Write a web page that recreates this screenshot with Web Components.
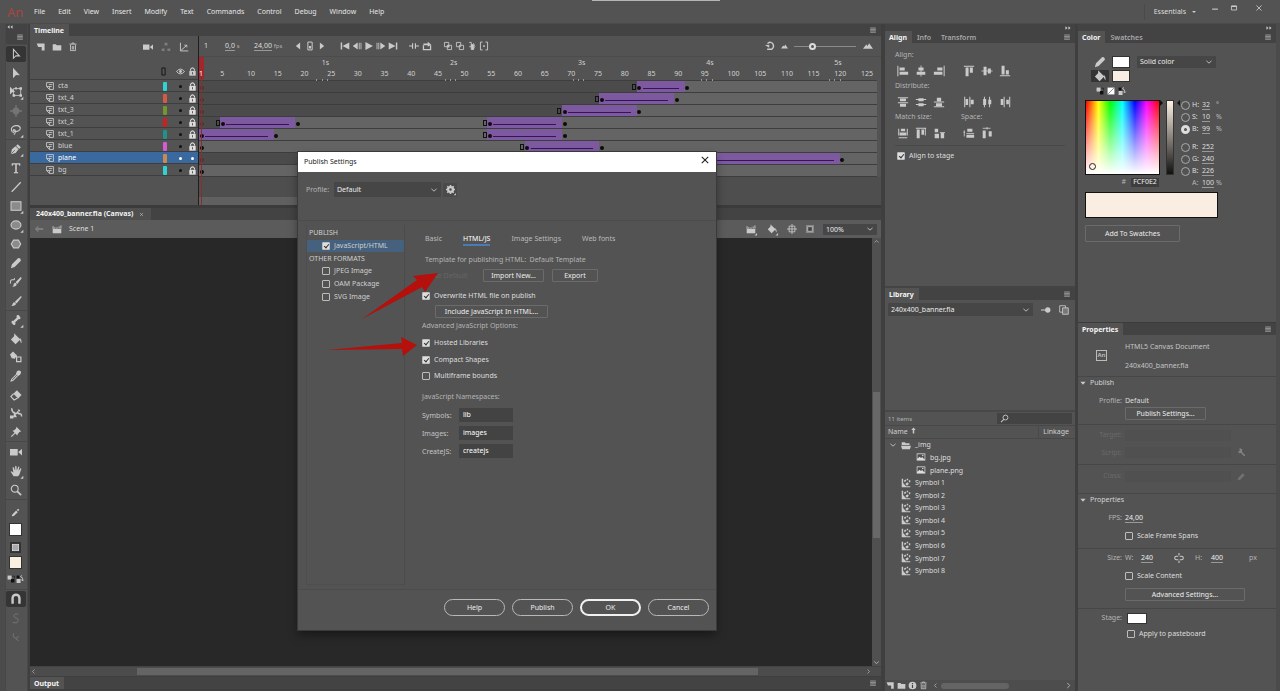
<!DOCTYPE html>
<html lang="en">
<head>
<meta charset="utf-8">
<title>Animate - Publish Settings</title>
<style>
:root{--ui:"Noto Sans","Open Sans",sans-serif;--panel:#535353;--strip:#434343;--edge:#3b3b3b;--line:#484848;--field:#464646;--text:#dedede;--dim:#b4b4b4;--icon:#cacaca}
html,body{margin:0;height:100%}
body{background:var(--strip);color:var(--text);font:7px/12px var(--ui);overflow:hidden}
</style>
</head>
<body>
<an-app></an-app>
<script>
const BASE = `*{box-sizing:border-box}:host{display:block;color:var(--text)}
button,input,select{font:inherit;color:inherit;margin:0;padding:0;border:0;background:none;outline:0}
b{font-weight:600}.row{display:flex;align-items:center}.dim{color:var(--dim)}.grow{flex:1}
a{color:inherit;text-decoration:none}`;
const define = (name, css, html, init) => customElements.define(name, class extends HTMLElement {
  connectedCallback(){
    if (this.shadowRoot) return;
    const t = document.createElement('template');
    t.innerHTML = `<style>${BASE}${css}</style>` + (typeof html === 'function' ? html(this) : html);
    this.attachShadow({mode:'open'}).append(t.content.cloneNode(true));
    if (init) init(this, this.shadowRoot);
  }
});

/* ---- icons, 14 x 14 grid ---- */
const S = (d, w=1.2) => `<path d="${d}" fill="none" stroke="currentColor" stroke-width="${w}"/>`;
const F = d => `<path d="${d}"/>`;
const ICONS = {
 arrow:S('M4 1.5v10.5l2.9-3 4.1.2z',1.2),
 sub:F('M3.5 1v12l3.5-3.6 4.5.1z'),
 transform:F('M0 1v9l2.5-2.6L6 7z')+S('M4 3h8.5v8H4z',1)+F('M3 9.5h3v3H3zM11 9.5h3v3h-3zM11 1.5h3v3h-3zM6 1.5h2v2.5H6z'),
 rot3d:`<g opacity=".28"><circle cx="7" cy="7" r="4"/>${S('M7 0v14M0 7h14',1.6)}</g>`,
 lasso:S('M4.5 10.2C1 9 .8 5.200 3 3.400c3-2.400 8.500-2 9 1.400.4 3-4.800 5-7.500 3.500C3 7.500 4.200 5.700 5.700 7c1.300 1.300.300 4-1.200 5.500',1.3),
 pen:F('M1 13l1.200-5.700 4.200-3.600L10 7.200 6.600 11.800z')+S('M8 2.500L11.700 6',2.600)+`<path d="M1.500 12.500L5.600 8.400" stroke="#535353" stroke-width=".9"/>`,
 text:F('M2 1.500h10v3h-1.200l-.4-1.500H7.900v8.700l1.600.4v1H4.500v-1l1.600-.4V3H3.600l-.4 1.500H2z'),
 lineTool:S('M2 12.500L12.500 1.500',1.400),
 rect:`<rect x="1.200" y="2" width="11.600" height="10" fill="#8b8b8b" stroke="currentColor" stroke-width="1.200"/>`,
 oval:`<ellipse cx="7" cy="7" rx="5.800" ry="4.800" fill="#8b8b8b" stroke="currentColor" stroke-width="1.300"/>`,
 poly:`<path d="M4.200 2.500h5.600L12.500 7 9.800 11.500H4.200L1.500 7z" fill="#8b8b8b" stroke="currentColor" stroke-width="1.300"/>`,
 pencil:F('M1 13l1.300-4.500 7-7q1.400-1 2.700.4t.4 2.700l-7 7z'),
 brushLine:F('M12.800 1L6.500 7.300l2 2L13.500 3zM5.800 8q2 .300 2 2.500-1.800 2.500-5 2 1.500-1 1.300-2.300.4-1.800 1.700-2.200z')+S('M.8 9Q-.3 3.500 3.500 4.500 6 4.500 5 2.500',1.200),
 brush:F('M13 1L5.700 8l2 2L13.500 2.500zM5 8.500q2 .300 2 2.300-1.800 2.500-5.500 2 1.500-1 1.500-2.300.5-1.600 2-2z'),
 bone:S('M4.500 9.500L9.500 4.500',2.600)+F('M3.500 7.500l3 3-.5 2q-2.800 1-3-1-2-.700-1-3zM10.500 6.500l-3-3 .5-2q2.800-1 3 1 2 .700 1 3z'),
 bucket:F('M1 7.500L6.500 2 12 7.500 6.500 13zM11.500 5.500q2.500 2 2 6.500-1.500-.5-2-4.500z')+S('M5.500 5.500V1',1.300),
 ink:F('M0 4l3.500-3.500L7 4l-1 5-4-.5zM4.500 6.500L8 4v4z')+S('M7.700 7h5v5.500h-5z',1.400),
 dropper:F('M7 4.300L9.700 7 12 5q2-3-.4-4.100T7.800 2z')+S('M8 4.800L2 10.800l-.7 2 2-.6 6-6',1.200),
 eraser:F('M8 1.500L13.500 7 9.500 11 4 5.500z')+S('M4.300 5.500L1 8.800 4.800 12.800 9 10.500',1.300),
 warp:S('M2 1.500q0 4 3 5.500t4-1l1.500 2q3-1 3 3',1.700)+F('M0 10h4v3.500H0zM9 2.500l3 1-1.500 3zM5 5l3 7H4z'),
 pin:F('M7.500 1L13 6.500l-2 .5-2 2.200L8.500 11 3 5.500l1.900-.5 2.200-2z')+S('M6 8L1.500 12.500',1.300),
 camera:F('M0 3.500h9v7.500H0zM9.500 7L14 3.500V11z'),
 hand:F('M4.200 13L.8 7.800q.600-1.300 2 0L4 9 3 3q.900-1.200 1.600.3L6 6.800 6 1.500q1-1.200 1.500 0L8 6.500 9.600 2q1.200-.8 1.300.4L10 7l2-3q1.300-.4 1.200.8L11 11 9.500 13z'),
 zoom:`<circle cx="5.500" cy="5.500" r="4" fill="none" stroke="currentColor" stroke-width="1.300"/>`+S('M8.500 8.500L13 13',2),
 magnet:S('M3 12.500V6a4 4 0 0 1 8 0v6.500',2.800),
 s1:`<g opacity=".22">${S('M10 2.500H6q-3 2.500 0 4 6 1.500 2 6H3',1.400)}</g>`,
 s2:`<g opacity=".22">${S('M4 2.500v4l6 5M7 9l3-3',1.400)}</g>`,
 newLayer:F('M1 2h11v10H8V7H3z'), folder:F('M1 3h4.500l1 1.500H13V12H1z'),
 trash:S('M3.500 4v8h7V4M2 3h10M5.500 3V1.500h3V3M6 5.500v5M8 5.500v5',1.200),
 tree:`<g opacity=".35">${F('M5 1h4v4H5zM1 9h4v3.500H1zM9 9h4v3.500H9z')}</g>`,
 graph:S('M2 1v11.500h11M3 11.500L10.500 5M7.500 4.500h3.500v3',1.300),
 prev:F('M10 2v10L4 7z'), next:F('M4 2v10l6-5z'),
 first:F('M1 2h2v10H1zM13 2v10L3.500 7z'), last:F('M11 2h2v10h-2zM1 2v10l9.500-5z'),
 back:F('M8 2v10L1 7zM9.500 2.500h1.200v9H9.500zM12 2.500h1.200v9H12z'), fwd:F('M6 2v10l7-5zM.8 2.500H2v9H.8zM3.300 2.500h1.200v9H3.300z'),
 play:F('M2 1.500v11L12.500 7z'),
 key:S('M4 1.500h6v11H4z',1.400)+F('M5.500 7h3v3.500h-3z'),
 center:S('M0 7h5M9 7h5M5 3v8M9 3v8',1.600),
 loop:S('M2 6v6h10V6',1.800)+F('M2 3.500h6V1l5 4.200L8 8V6H2z'),
 onion1:S('M2 2h6v6H2zM6 6h6v6H6z',1.200)+F('M6 6h3v3H6z'),
 onion2:S('M2 2h6v6H2zM6 6h6v6H6z',1.200),
 onion3:S('M3 2h3v6H3M6 5h3v7H6z',1.200)+F('M6 5h3v7H6z')+S('M9 3q4 4 0 9',1),
 marks:S('M5 1.500H2v11h3M9 1.500h3v11H9',1.300)+F('M6 6h2v2.500H6z'),
 undo:S('M3.500 3.500q5-3.500 7.500.5t-1.500 7.500H3',2)+F('M0 5.500l6-.2-.2 4.200z'),
 mtn:F('M0 11l4.500-6 2 2L8.500 3 14 11z'),
 eye:S('M.8 7Q7-.5 13.200 7 7 14.500.8 7z',1.500)+`<circle cx="7" cy="7" r="2.200"/>`,
 lock:F('M2 6h10v7.500H2z')+S('M4 6V3.500Q7-.800 10 3.500V6',1.700)+`<path d="M7 8v3.500" stroke="#444" stroke-width="1.300"/>`,
 layer:S('M1 1h12v12H6L1 8z',1.500)+S('M5 4.500h6M5 8h5M6 8v5M1 8h5',1.500),
 outline:`<path d="M4.500 1.500h5v11h-5z" fill="none" stroke="#161616" stroke-width="1.500"/>`,
 chev:S('M2.500 5L7 9l4.500-4',1.500), left:S('M9 3L5 7l4 4'), right:S('M5 3l4 4-4 4'), up:S('M3 9l4-4 4 4'),
 ham:`<g opacity=".75">${S('M2 3.500h10M2 6h10M2 8.500h10M2 11h10',1.400)}</g>`,
 dbl:F('M1 3l5 4-5 4zM8 3l5 4-5 4z'), dbll:F('M6 3L1 7l5 4zM13 3L8 7l5 4z'),
 clap:F('M1 7h12v6H1z')+S('M1.500 7V3M4 7V4.500M7 7V4.500M10 6.500V3.500M12.500 6.500V2',1.300),
 stagec:S('M7 0v14M0 7h14M3 3h8v8H3z',1.200),
 clip:`<path d="M0 0h14v14H0z" fill="#8a8a8a"/><path d="M3 3h8v8H3z" fill="#444" stroke="#ddd"/>`,
 gear:`<circle cx="7" cy="7" r="3.800" fill="none" stroke="currentColor" stroke-width="3.600"/>`+S('M7 0v3M7 11v3M0 7h3M11 7h3M2 2l2 2M10 10l2 2M12 2l-2 2M2 12l2-2',2.400),
 close:S('M2.500 2.500l9 9M11.500 2.500l-9 9',1.500), min:S('M2 9h10',2), max:S('M2.500 3.500h9v7h-9z',1.500)+F('M2.500 3h9v2.300h-9z'),
 alL:S('M1 1v12',1.200)+F('M3 3h6v3.500H3zM3 8h10v3.500H3z'), alC:S('M7 .5v13',1)+F('M4 3h6v3.500H4zM2 8h10v3.500H2z'), alR:S('M13 1v12',1.200)+F('M5 3h6v3.500H5zM1 8h10v3.500H1z'),
 alT:S('M1 1.500h12',1.200)+F('M3 3h3.500v10H3zM8 3h3.500v6H8z'), alM:S('M.5 7h13',1)+F('M3 2h3.500v10H3zM8 4h3.500v6H8z'), alB:S('M1 12.500h12',1.200)+F('M3 1h3.500v10H3zM8 6h3.500v5H8z'),
 diT:S('M1 2h12M1 8h12',1.200)+F('M3.500 3h7v3h-7zM3.500 9h7v3.500h-7z'), diM:S('M1 4h12M1 10h12',1.200)+F('M4 2.500h6v3.500H4zM4 8.500h6V12H4z'), diB:S('M1 7h12M1 12.500h12',1.200)+F('M4.500 2h5v4.500h-5zM3.500 8.500h7V12h-7z'),
 diL:S('M2 1v12M8 1v12',1.200)+F('M3 3.500h3v7H3zM9 4.500h3.500v5H9z'), diC:S('M4 1v12M10 1v12',1.200)+F('M2.500 3.500h3.500v7H2.500zM8.500 4.500H12v5H8.500z'), diR:S('M6 1v12M12.500 1v12',1.200)+F('M2 3.500h3v7H2zM8.500 4.500h3v5h-3z'),
 msW:S('M2 2v8M12 2v8M2 12.500h10',1.200)+F('M4.500 2h5v3h-5zM3 6.500h8V10H3z'), msH:S('M1 1.500h12M12 1v9',1.200)+F('M2 3h3.500v10H2zM7.500 3h3v6h-3z'), msB:F('M2 2h4v4H2zM2 8h5v5H2zM9 7h4v6H9z')+S('M8 6.500h6',1),
 spV:S('M1.500 4v7M.5 6h2',1)+F('M5 2h6v3.500H5zM4 9h9v3.500H4z')+S('M4 7.500h9',1), spH:S('M2 1.500h9M7 0v3',1)+F('M2 4h3.500v9H2zM9 5h3.500v6H9z'),
 swap1:F('M1 1h7v7H1z')+`<path d="M7 7h6v6H7z" fill="#111"/><path d="M9 2h4v4" fill="none" stroke="#111"/>`,
 none:`<path d="M1 1h12v12H1z" fill="#fff"/><path d="M2 12L12 2" stroke="#777" stroke-width="1.500"/>`,
 swap2:`<path d="M1 1h5v5H1z" fill="#111"/>`+F('M1 7h7v7H1z')+S('M8 2.500q4.500 1 3.500 7M9.500 8l2 2.500 2-2.500M10 .5L8 2.500l2 2.500',1.400),
 pinH:S('M0 7h7',1.500)+`<circle cx="9.500" cy="7" r="3.700"/>`,
 newLib:S('M1 1h8v9H1z',1.200)+`<path d="M5 4h8v9H5z" fill="#777" stroke="currentColor" stroke-width="1.200"/>`,
 search:`<circle cx="8.500" cy="5.500" r="3.800" fill="none" stroke="currentColor" stroke-width="1.400"/>`+S('M6 8.500L1.500 12.500',1.600),
 sort:F('M7 1l4.500 5h-3v7h-3V6h-3z'),
 openFolder:F('M1 3h4.500l1 1.500H12V7H1zM0 8h14l-1.500 5H1.500z'),
 image:`<path d="M1 2h12v10H1z" fill="#ddd"/><path d="M2 3h10v7.500L8.500 7 7 8.500 5 6.500 2 9.500z" fill="#4c4c4c"/><circle cx="9.500" cy="5" r="1" fill="#ddd"/>`,
 symbol:F('M1 1h2v6l4 4.500h6V13H1zM4 4l2-2 1.500 1.500L5.500 6zM8 1h2v2H8zM11 3h2v3h-2zM9 6l2 2-2.500 3L6 8.500z'),
 info:`<circle cx="7" cy="7" r="6"/><path d="M7 6v5M7 3v1.600" stroke="#444" stroke-width="1.800"/>`,
 wrench:`<g opacity=".4">${S('M5 5l7 7',2.500)}${F('M4 0l4 2v5l-4 1-3-2 3-1V3z')}</g>`, pencilDim:`<g opacity=".25">${F('M1 13l1-4 7-7 3 3-7 7z')}</g>`,
 link:S('M6 4.500H3.500a2.500 2.500 0 0 0 0 5H6M8 4.500h2.500a2.500 2.500 0 0 1 0 5H8M7 0v3M7 11v3',1.500),
 tri:F('M1 4h12L7 11z'),
 backArrow:`<g opacity=".3">${F('M6 2v3.500h7v3H6V12L1 7z')}</g>`,
 kPen:F('M1 13l1-3 6-6 2.500 2.500-6 6zM9 3l2-2 2 2-2 2z'),
 magGrid:`<rect x="0" y="0" width="14" height="14" fill="#333"/><rect x="3" y="3" width="8" height="8" fill="#aaa" stroke="#ddd"/>`
};
define('an-icon', `:host{display:inline-flex;flex:none;width:12px;height:12px;color:var(--icon)}svg{display:block;width:100%;height:100%;overflow:visible}`,
 el => `<svg viewBox="0 0 14 14" fill="currentColor" aria-hidden="true">${ICONS[el.getAttribute('name')]}${el.hasAttribute('more') ? `<path d="M15.500 16v-3.500L12 16z"/>` : ''}</svg>`);
const I = (n, s='', a='') => `<an-icon name="${n}" ${a} ${s ? `style="${s}"` : ''}></an-icon>`;

/* ---- small controls ---- */
define('check-box', `:host{display:inline-block}label{display:flex;align-items:center;gap:4px;white-space:nowrap}
input{appearance:none;width:8px;height:8px;border:1px solid #bdbdbd;border-radius:1px;flex:none}
input:checked{background:#dedede;position:relative}
input:checked::after{content:"";position:absolute;left:2px;top:0;width:2px;height:4px;border:solid #333;border-width:0 1px 1px 0;transform:rotate(40deg)}`,
 el => `<label><input type="checkbox" ${el.hasAttribute('checked') ? 'checked' : ''}><span><slot></slot></span></label>`);
define('push-button', `:host{display:inline-block}button{display:block;width:100%;height:100%;border:1px solid #6b6b6b;border-radius:1px;text-align:center;white-space:nowrap;color:#ececec;line-height:10px}
:host([round]) button{border:1px solid #b8b8b8;border-radius:9px}:host([primary]) button{border:2px solid #f0f0f0}
:host([ghost]) button{border-color:transparent;color:#666}`,
 el => `<button type="button" ${el.hasAttribute('ghost') ? 'disabled' : ''}><slot></slot></button>`);
define('drop-down', `:host{display:block;position:relative;background:var(--field)}select{appearance:none;display:block;width:100%;height:100%;padding:0 14px 0 3px;color:#ececec;opacity:1}
an-icon{position:absolute;right:3px;top:50%;margin-top:-4px;width:8px;height:8px;pointer-events:none}`,
 el => `<select aria-label="${el.getAttribute('label')}"><option>${el.getAttribute('value')}</option></select>${I('chev')}`);
define('panel-tabs', `:host{display:flex;height:12px;background:var(--strip);align-items:stretch}
button{padding:0 5px;color:#a8a8a8;font-weight:600;line-height:11px}button:first-of-type{background:var(--panel);color:#f4f4f4;font-weight:700;padding:0 5px 0 4px}
an-icon{width:8px;height:8px;margin:2px 4px 0 auto}`,
 el => el.getAttribute('tabs').split(',').map(t => `<button type="button">${t}</button>`).join('') + I('ham'));

/* ---- title bar ---- */
define('title-bar', `:host{display:flex;height:24px;align-items:center;background:var(--panel);position:relative;border-bottom:1px solid #4b4b4b}
.logo{color:#a8463f;font-size:13px;line-height:20px;width:27px;padding-left:7px}
nav{display:flex;gap:13px;color:#e6e6e6;padding-left:7px}.strip{position:absolute;left:592px;width:128px;top:0;height:1px;background:#b5b5b5}
.ws{margin-left:auto;display:flex;align-items:center;border-left:1px solid #4a4a4a;height:16px;padding-left:9px}
.ws i{width:0;border:2px solid transparent;border-top:2px solid #ccc;border-bottom:0;margin-left:6px}
.win{display:flex;margin:0 16px 8px 14px;gap:9px}.win button{width:10px;height:8px;display:grid;place-items:center}.win button:last-child{margin-left:6px}.win an-icon{width:8px;height:8px}`,
`<div class="logo">An</div><nav>${'File,Edit,View,Insert,Modify,Text,Commands,Control,Debug,Window,Help'.split(',').map(m => `<a href="#">${m}</a>`).join('')}</nav><div class="strip"></div>
<div class="ws">Essentials<i></i></div><div class="win"><button aria-label="Minimize">${I('min')}</button><button aria-label="Maximize">${I('max')}</button><button aria-label="Close">${I('close')}</button></div>`);

/* ---- tools ---- */
const G = (names, h) => `<div class="g" style="height:${h}px">${names.split(' ').map(n => { const [a, m] = n.split('+'); return `<button aria-label="${a}" class="${a === 'arrow' || a === 'magnet' ? 'on' : ''}">${I(a, '', m !== undefined ? 'more' : '')}</button>`; }).join('')}</div>`;
define('tool-panel', `:host{display:flex;flex-direction:column;background:var(--panel);border-left:1px solid #484848;border-right:1px solid #484848}
.top{height:20px;background:var(--strip);display:flex;flex-direction:column;justify-content:space-between;padding:0 3px 3px 1px}.top an-icon{width:6px;height:6px}.top an-icon:last-child{align-self:flex-end;width:8px;height:8px}
.g{display:grid;grid-auto-rows:1fr;border-top:1px solid var(--line);flex:none;padding-right:1px}button{display:grid;place-items:center;width:20px;justify-self:center}.on{background:#353535;border-radius:2px;align-self:center;height:16px}
.c{border-top:1px solid var(--line);display:flex;flex-direction:column;align-items:center;height:90px;padding:8px 2px 0 0}.sw{width:13px;height:13px;background:#fff;border:1px solid #333;margin-top:6px}.c2{background:#faf0e0;margin-top:3px}
.c .s{display:flex;gap:1px;margin-top:6px}.s an-icon{width:8px;height:8px}`,
`<div class="top">${I('dbll')}${I('ham')}</div>
${G('arrow sub transform+ rot3d lasso+', 95)}${G('pen+ text lineTool rect+ oval+ poly pencil brushLine brush', 171)}${G('bone+ bucket ink dropper eraser warp pin', 131)}${G('camera hand+ zoom', 58)}
<div class="c">${I('kPen','width:9px;height:9px')}<div class="sw"></div>${I('magGrid','margin-top:6px;width:11px;height:11px')}<div class="sw c2"></div><div class="s">${I('swap1')}${I('swap2')}</div></div>
${G('magnet s1 s2', 57)}`);

/* ---- timeline ---- */
const LAYERS = [
 ['cta','#2fd3d3',[['e',82],['t',83,92]],83],['txt_4','#d35a45',[['e',75],['t',76,90]],76],['txt_3','#76952a',[['e',68],['t',69,83]],69],
 ['txt_2','#c92020',[['e',4],['t',5,19],['e',54],['t',55,69]],5],['txt_1','#1f9486',[['t',1,15],['e',54],['t',55,69]],1],
 ['blue','#d35bd3',[['k',1],['e',61],['t',62,76]],1],['plane','#c98a4f',[['t',70,121]],70],['bg','#2fd3d3',[['k',1]],1]];
define('layer-row', `:host{display:grid;grid-template-columns:118px 1fr 12px 12px;align-items:center;height:12px;border-bottom:1px solid #3e3e3e;padding-left:16px;color:#cfcfcf}
:host([sel]){background:#3a699f;color:#fff}.n{display:flex;gap:4px;align-items:center}.n an-icon{width:8px;height:8px}.col{width:4px;height:9px;justify-self:start;margin-left:-1px;border-radius:1px}
i{width:3px;height:3px;border-radius:50%;background:#111;justify-self:center}:host([sel]) i{background:#fff}.l{width:9px;height:9px;justify-self:center;color:#ddd}`,
 el => `<div class="n">${I('layer')}${el.getAttribute('name')}</div><div class="col" style="background:${el.getAttribute('color')}"></div><i></i>${el.hasAttribute('sel') ? '<i></i>' : `<an-icon class="l" name="lock"></an-icon>`}`);
const track = ([n, c, parts, lit]) => `<div class="tr"><div class="lit" style="grid-column:${lit}/128"></div>${lit > 1 ? '<i class="o" style="grid-column:1"></i>' : ''}${parts.map(([k, a, b]) =>
  k === 'e' ? `<i class="e" style="grid-column:${a}"></i>` : k === 'k' ? `<i class="k" style="grid-column:${a}"></i>` :
  `<div class="tw" style="grid-column:${a}/${b}"><s></s></div><i class="k" style="grid-column:${a}"></i><i class="k" style="grid-column:${b}"></i>`).join('')}</div>`;
define('timeline-panel', `:host{display:flex;flex-direction:column;background:var(--panel);height:181px}
.body{display:grid;grid-template-columns:169px 1fr;flex:1}.lay{border-right:1px solid #1f1f1f;display:flex;flex-direction:column}
.bar{height:21px;display:flex;align-items:center;border-bottom:1px solid #4c4c4c}.bar an-icon{width:10px;height:10px}
.a{padding:0 9px 0 6px;gap:6px;border:0}.hd{height:23px;display:grid;grid-template-columns:138px 1fr 12px 12px;align-items:end;padding-bottom:3px;border-bottom:1px solid #3e3e3e}.hd an-icon{width:9px;height:9px;justify-self:center}.hd an-icon:first-of-type{justify-self:end}
.b{padding:0 7px 0 5px}.grp{display:flex;gap:2px;align-items:center;height:100%}.grp+.grp{margin-left:11px}u{text-underline-offset:2px;text-decoration-color:#999}small{font-size:6px;color:#b0b0b0}
.tl{position:relative;display:flex;flex-direction:column}.ruler,.tr{display:grid;grid-template-columns:repeat(127,minmax(0,1fr))}
.area{width:100%;padding-right:4px}.ruler{height:24px;grid-template-rows:11px 13px;color:#d2d2d2;border-bottom:1px solid #3e3e3e}.ruler span{white-space:nowrap;width:0}
.tick{grid-row:2;align-self:end;height:2px;width:1px;background:#999}
.tr{height:12px;border-bottom:1px solid #3d3d3d;background:#4b4b4b;grid-template-rows:11px}.tr>*{grid-row:1}.lit{background:#646464}.tw{background:#7d5a9f;display:flex;align-items:flex-end;padding:0 6px 3px}
s{flex:1;height:1px;background:#35145c}i{align-self:end;margin-bottom:2px;justify-self:center}.k{width:4px;height:4px;border-radius:50%;background:#0c0c0c}.e{width:4px;height:6px;border:1px solid #111}.o{width:4px;height:4px;border:1px solid #6b2222;border-radius:50%}
.ph{position:absolute;left:0;top:0;width:5px;height:22px;background:#a3272a}.pl{position:absolute;left:2px;top:22px;bottom:-28px;width:1px;background:#8d2c2e}
.one{position:relative;color:#fff}.foot{height:28px;background:#4e4e4e;display:flex}.sb{margin-top:auto;height:8px;background:#606060;width:70%}
input[type=range]{appearance:none;width:62px;height:8px}input::-webkit-slider-runnable-track{height:1px;background:#8a8a8a}input::-webkit-slider-thumb{appearance:none;width:7px;height:7px;margin-top:-3px;border:2px solid #ddd;border-radius:50%;background:#555}
.z{margin-left:auto;display:flex;align-items:center;gap:6px}`,
`<panel-tabs tabs="Timeline"></panel-tabs>
<div class="body"><div class="lay"><div class="bar a">${I('newLayer')}${I('folder')}${I('trash')}<span class="grow"></span><span class="row" style="gap:8px">${I('camera')}${I('tree')}${I('graph')}</span></div>
<div class="hd">${I('outline')}<span></span>${I('eye')}${I('lock')}</div>
${LAYERS.map(([n, c]) => `<layer-row name="${n}" color="${c}" ${n === 'plane' ? 'sel' : ''}></layer-row>`).join('')}</div>
<div><div class="bar b"><div style="width:21px">1</div><div style="width:29px"><u>0,0</u> <small>s</small></div><div style="width:39px"><u>24,00</u> <small>fps</small></div>
<div class="grp">${I('prev')}${I('key')}${I('next')}</div><div class="grp" style="margin-left:13px">${I('first')}${I('back')}${I('play')}${I('fwd')}${I('last')}</div>
<div class="grp" style="gap:3px">${I('center')}${I('loop')}</div><div class="grp">${I('onion1')}${I('onion2')}${I('onion3')}${I('marks')}</div>
<div class="z">${I('undo')}${I('mtn','width:7px;height:7px')}<input type="range" aria-label="Timeline zoom" min="0" max="100" value="27">${I('mtn','width:12px')}</div></div>
<div class="tl"><div class="area"><div class="ruler">${[1,2,3,4,5].map(s => `<span style="grid-area:1/${s*24}">${s}s</span>`).join('')}<div class="ph"></div><span class="one" style="grid-area:2/1">1</span>${Array.from({length:25}, (_, i) => `<span style="grid-area:2/${i*5+5}">${i*5+5}</span>`).join('')}${[23,24,25,47,48,49,71,72,73,95,96,97,119,120,121].map(n => `<div class="tick" style="grid-column:${n}"></div>`).join('')}</div>
${LAYERS.map(track).join('')}</div><div class="pl"></div></div><div class="foot"><div class="sb"></div></div></div></div>`);

/* ---- stage ---- */
define('stage-panel', `:host{display:flex;flex-direction:column;border-top:3px solid #3b3b3b;flex:1;min-height:0}
.tabs{display:flex;height:12px;background:var(--strip)}.tabs button{background:#4f4f4f;padding:0 7px 0 6px;font-weight:700;color:#f2f2f2;display:flex;align-items:center;gap:6px}.tabs an-icon{width:5px;height:5px}
.bar{height:18px;background:#5b5b5b;display:flex;align-items:center;padding:0 4px 0 4px}.bar>an-icon{width:10px;height:10px}.bar .r{margin-left:auto}
.r{gap:9px}.r an-icon{width:10px;height:10px}drop-down{width:54px;height:11px}
.view{flex:1;display:grid;grid-template-columns:1fr 9px;min-height:0}.cv{background:#282828}.vs{background:#505050;display:flex;flex-direction:column;justify-content:space-between;align-items:center}.vs an-icon{width:7px;height:7px}
.vs i{width:7px;height:146px;background:#686868;margin-top:26px}
.hs{height:10px;background:#4c4c4c;display:flex;align-items:center;border-top:1px solid #444}.hs an-icon{width:7px;height:7px}.hs i{height:7px;background:#646464;flex:0 0 73%;margin-left:100px}.hs an-icon:last-child{margin-left:auto;margin-right:9px}
panel-tabs{height:12px;margin:1px 0 2px}`,
`<div class="tabs"><button>240x400_banner.fla (Canvas) ${I('close')}</button></div>
<div class="bar">${I('backArrow')}<span style="width:8px"></span>${I('clap')}<span style="width:7px"></span><span>Scene 1</span><div class="r row">${I('clap','width:12px','more')}${I('bucket','width:12px','more')}${I('stagec')}${I('clip','width:8px;height:8px')}<drop-down label="Zoom" value="100%"></drop-down></div></div>
<div class="view"><div class="cv"></div><div class="vs">${I('up')}<i></i>${I('chev')}</div></div><div class="hs">${I('left')}<i></i>${I('right')}</div>
<panel-tabs tabs="Output"></panel-tabs>`);

/* ---- align ---- */
const icons = s => s.split(' ').map(n => I(n)).join('');
define('align-panel', `:host{background:var(--panel);height:255px}.b{padding:7px 10px 0 10px}.h{height:10px;line-height:10px;display:grid;grid-template-columns:66px 1fr;color:var(--dim)}
.g{height:21px;display:flex;align-items:center;gap:6px;padding-left:2px}.g an-icon:nth-child(4){margin-left:12px}hr{border:0;border-top:1px solid #484848;margin:2px 0 4px}.b>check-box{margin-left:2px}`,
`<panel-tabs tabs="Align,Info,Transform"></panel-tabs><div class="b"><div class="h">Align:</div><div class="g">${icons('alL alC alR alT alM alB')}</div><div class="h">Distribute:</div><div class="g">${icons('diT diM diB diL diC diR')}</div>
<div class="h"><span>Match size:</span><span>Space:</span></div><div class="g">${icons('msW msH msB spV spH')}</div><hr><check-box checked>Align to stage</check-box></div>`);

/* ---- library ---- */
define('library-panel', `:host{background:var(--panel);display:flex;flex-direction:column;flex:1;border-top:2px solid #444}
.sel{display:flex;align-items:center;gap:8px;padding:3px 6px 0 3px;height:16px}.sel drop-down{flex:1;height:13px}.sel an-icon{width:10px;height:10px}
.pre{height:96px;border-bottom:2px solid #484848}.s{display:flex;height:13px;align-items:center;padding:0 3px;font-size:6px;color:var(--dim)}.s label{margin-left:auto;background:#434343;width:75px;height:11px;display:flex;align-items:center;padding:0 3px;gap:3px}.s an-icon{width:9px;height:9px}.s input{width:50px}
.list{border-collapse:collapse;width:100%;height:152px}.list th{font-weight:400;text-align:left;color:#cfcfcf;border-bottom:1px solid #484848;border-top:1px solid #484848;padding:0 3px}.list th:last-child{text-align:right;border-left:1px solid #484848;width:37px;padding-right:6px}
td{padding:0}th,td{line-height:11px}.r{display:flex;align-items:center;gap:4px;height:12px}.r an-icon{width:10px;height:10px}.s0{padding-left:4px}.s1{padding-left:16px}.s2{padding-left:31px;}
.f{margin-top:auto;height:11px;display:flex;align-items:center;gap:2px;padding-left:1px;background:#4d4d4d}.f an-icon{width:9px;height:9px}.f i{height:6px;width:68px;background:#646464;border-radius:3px}.f an-icon:last-child{margin-left:auto;margin-right:2px}th an-icon{width:7px;height:7px}.s0 an-icon:first-child{width:8px;height:8px}`,
`<panel-tabs tabs="Library"></panel-tabs><div class="sel"><drop-down label="Document" value="240x400_banner.fla"></drop-down>${I('pinH')}${I('newLib')}</div><div class="pre"></div>
<div class="s">11 items<label>${I('search')}<input type="text" aria-label="Search"></label></div>
<table class="list"><tr><th>Name ${I('sort')}</th><th>Linkage</th></tr>
<tr><td colspan="2"><div class="r s0">${I('chev')}${I('openFolder')}_img</div></td></tr>${['bg.jpg','plane.png'].map(n => `<tr><td colspan="2"><div class="r s2">${I('image')}${n}</div></td></tr>`).join('')}${[1,2,3,4,5,6,7,8].map(n => `<tr><td colspan="2"><div class="r s1">${I('symbol')}Symbol ${n}</div></td></tr>`).join('')}</table>
<div class="f">${I('newLayer')}${I('folder')}${I('info')}${I('trash')}${I('left','width:7px;margin-left:2px')}<i></i>${I('right')}</div>`);

/* ---- color ---- */
const ch = (n, v, u, on, c='') => `<div class="ch ${c}"><label><input type="radio" name="ch" ${on ? 'checked' : ''}>${n}:</label><u>${v}</u><small>${u}</small></div>`;
define('color-panel', `:host{background:var(--panel);height:291px;}.b{padding:13px 0 0 7px}
.top{display:grid;grid-template-columns:18px 18px 1fr;column-gap:3px;grid-auto-rows:12px;row-gap:2px;padding-left:6px}.top .i{display:grid;place-items:center}.top .on{background:#353535}.top div.sw{border:1px solid #333;background:#fff}.top drop-down{width:79px;height:12px;margin-left:4px}
.m{display:flex;gap:3px;padding:5px 0 0 11px;height:18px}.m an-icon{width:8px;height:8px}.p{display:grid;grid-template-columns:75px 8px 1fr;column-gap:6px;height:87px}
.hue{height:75px;border:1px solid #111;background:linear-gradient(to top,#fff,rgba(255,255,255,0)),linear-gradient(90deg,#f00,#ff0 17%,#0f0 33%,#0ff 50%,#00f 67%,#f0f 83%,#f00);position:relative}.hue i{position:absolute;left:3px;bottom:4px;width:7px;height:7px;border:1px solid #222;border-radius:50%}
.br{height:75px;border:1px solid #333;background:linear-gradient(#fff2e4,#111);position:relative}.br::before,.br::after{content:"";position:absolute;top:-1px;border:3px solid transparent}.br::before{left:-7px;border-left-color:#111}.br::after{right:-7px;border-right-color:#111}
.ch{display:grid;grid-template-columns:20px 13px 1fr;height:12px;align-items:center;column-gap:1px}.ch label{display:flex;gap:2px;align-items:center}.v{padding-left:1px;margin-top:-1px}.v .gap{height:6px}
input[type=radio]{appearance:none;width:9px;height:9px;border:1px solid #aaa;border-radius:50%}input:checked{border:3px solid #ddd!important}.al input{visibility:hidden}u{text-decoration-color:#999;text-underline-offset:2px}small{font-size:7px;color:#bbb}.al label{color:var(--dim)}
.hex{display:flex;justify-content:flex-end;gap:5px;align-items:center;height:14px;width:74px;color:var(--dim)}.hex input{width:28px;background:#3d3d3d;text-align:center;height:9px;color:#f0f0f0}
.pv{width:133px;height:26px;border:1px solid #111;background:#faeee2;margin:5px 0 7px}push-button{width:95px;height:17px}`,
`<panel-tabs tabs="Color,Swatches"></panel-tabs><div class="b"><div class="top"><div class="i">${I('pencil')}</div><div class="sw"></div><drop-down label="Type" value="Solid color"></drop-down><div class="i on">${I('bucket')}</div><div class="sw" style="background:#faeee2"></div></div>
<div class="m">${I('swap1')}${I('none')}${I('swap2')}</div>
<div class="p"><div><div class="hue"><i></i></div><label class="hex"># <input value="FCF0E2" aria-label="Hex"></label></div><div class="br"></div><div class="v">${ch('H',32,'°')}${ch('S',10,'%')}${ch('B',99,'%',1)}<div class="gap"></div>${ch('R',252,'')}${ch('G',240,'')}${ch('B',226,'')}${ch('A',100,'%',0,'al')}</div></div>
<div class="pv"></div><push-button>Add To Swatches</push-button></div>`);

/* ---- properties ---- */
define('properties-panel', `:host{background:var(--panel);flex:1;border-top:1px solid #3c3c3c}
section{border-bottom:1px solid #474747}.r{display:grid;grid-template-columns:44px 1fr;column-gap:3px;align-items:center}.r>:first-child{text-align:right;color:var(--dim)}
.doc{display:grid;grid-template-columns:47px 1fr;color:#c4c4c4;height:42px;padding:3px 0 1px}.doc p{margin:0;height:19px;line-height:18px}.an{align-self:center;justify-self:center;margin-bottom:4px;width:11px;height:11px;border:1px solid #bbb;line-height:9px;text-align:center;font-weight:600;font-size:6px}
h3{margin:0;font:inherit;display:flex;gap:4px;align-items:center;height:12px;padding-left:2px;color:#d4d4d4}h3 an-icon{width:6px;height:6px}
.x{display:flex;align-items:center}u{text-underline-offset:2px;text-decoration-color:#999;color:#eee}.sw{width:20px;height:11px;background:#fff;border:1px solid #333;margin-left:2px}.d1>:first-child{color:#6a6a6a!important}.f{width:106px;height:11px;background:#505050}`,
`<panel-tabs tabs="Properties"></panel-tabs>
<section class="doc"><div class="an">An</div><div><p>HTML5 Canvas Document</p><p>240x400_banner.fla</p></div></section>
<section style="height:48px"><h3>${I('tri')}Publish</h3><div class="r" style="height:12px;margin-top:6px"><span>Profile:</span><span>Default</span></div><div class="r"><span></span><push-button style="width:81px;height:13px">Publish Settings...</push-button></div></section>
<section style="height:40px"><div class="r d1" style="height:20px"><span>Target:</span><div class="f"></div></div><div class="r d1" style="height:15px"><span>Script:</span><div class="x"><div class="f"></div>${I('wrench','width:9px;height:9px;margin-left:6px')}</div></div></section>
<section style="height:29px"><div class="r d1" style="height:22px"><span>Class:</span><div class="x"><div class="f"></div>${I('pencilDim','width:9px;height:9px;margin-left:6px')}</div></div></section>
<section style="height:55px"><h3>${I('tri')}Properties</h3><div class="r" style="height:24px"><span>FPS:</span><u style="justify-self:start">24,00</u></div><div class="r" style="height:12px"><span></span><check-box>Scale Frame Spans</check-box></div></section>
<section style="height:60px"><div class="r" style="height:17px"><span>Size:</span><div class="x"><span class="dim" style="width:16px">W:</span><u style="width:33px">240</u>${I('link','width:10px;height:10px;margin-right:11px')}<span class="dim" style="width:16px">H:</span><u style="width:38px">400</u><span class="dim">px</span></div></div>
<div class="r" style="height:20px"><span></span><check-box>Scale Content</check-box></div><div class="r" style="margin-top:2px"><span></span><push-button style="width:120px;height:13px">Advanced Settings...</push-button></div></section>
<div class="r" style="height:18px"><span>Stage:</span><div class="sw"></div></div><div class="r" style="height:14px"><span></span><check-box style="margin-left:2px">Apply to pasteboard</check-box></div>`);

/* ---- publish dialog ---- */
define('publish-dialog', `:host{background:var(--panel);width:418px;display:flex;flex-direction:column;box-shadow:0 0 0 1px #3a3a3a,0 5px 9px rgba(0,0,0,.4)}
header{height:20px;background:#fff;color:#222;display:flex;align-items:center;justify-content:space-between;padding:0 6px}header an-icon{width:10px;height:10px;color:#222}
.prof{display:flex;align-items:center;height:49px;padding:0 8px 13px;border-bottom:1px solid #4c4c4c}.prof drop-down{width:107px;height:15px;margin:0 2px 0 2px}.prof .g{width:14px;height:14px;background:#4a4a4a;display:grid;place-items:center}.g an-icon{width:9px;height:9px}
.mid{display:grid;grid-template-columns:99px 1fr;height:369px;padding:4px 8px;border-bottom:1px solid #4c4c4c;gap:17px}.nav{border-right:1px solid #4b4b4b;border-left:1px solid #4e4e4e;border-bottom:1px solid #4e4e4e}
.nav .l{display:grid;grid-auto-rows:1fr;height:76px;margin-top:2px}.nav .l>*{padding-left:2px;display:flex;align-items:center;color:#cfcfcf}.nav check-box{padding-left:15px!important}.nav .on{background:#45617e}
.tabs{display:flex;gap:21px;height:12px;margin:8px 0 9px 3px;align-items:flex-start}.tabs button{line-height:11px;color:#bbb}.tabs .on{color:#fff;border-bottom:2px solid #4a7bb5;height:13px}
.main{color:#ddd}.bt{display:flex;gap:8px;margin:3px 0 8px}.bt push-button{height:13px}.c{display:block;height:12px}.ns{display:grid;grid-template-columns:37px 54px;row-gap:4px;margin-top:5px;color:#c4c4c4}.ns input{background:#434343;height:14px;padding:0 4px 2px;color:#fff;width:54px;min-width:0}.ns label{line-height:16px;height:14px}
footer{display:flex;justify-content:flex-end;gap:7px;padding:9px 7px 14px}footer push-button{width:61px;height:17px}
.arrows{position:absolute;left:0;top:0;width:130px;height:220px;pointer-events:none;overflow:visible}`,
`<header>Publish Settings<button aria-label="Close">${I('close')}</button></header>
<div class="prof"><span class="dim" style="width:26px">Profile:</span><drop-down label="Profile" value="Default"></drop-down><button class="g" aria-label="Profile options">${I('gear','','more')}</button></div>
<div class="mid"><div class="nav"><div class="l"><span>PUBLISH</span><check-box class="on" checked>JavaScript/HTML</check-box><span>OTHER FORMATS</span><check-box>JPEG Image</check-box><check-box>OAM Package</check-box><check-box>SVG Image</check-box></div></div>
<div class="main"><div class="tabs"><button>Basic</button><button class="on">HTML/JS</button><button>Image Settings</button><button>Web fonts</button></div>
<div class="dim" style="padding-left:3px">Template for publishing HTML:&ensp;Default Template</div>
<div class="bt"><push-button ghost style="width:53px">Use Default</push-button><push-button style="width:61px">Import New...</push-button><push-button style="width:46px">Export</push-button></div>
<check-box class="c" checked>Overwrite HTML file on publish</check-box><push-button style="width:113px;height:13px;margin:3px 0 2px 13px">Include JavaScript In HTML...</push-button>
<div class="dim" style="height:12px">Advanced JavaScript Options:</div><div style="height:5px"></div><check-box class="c" checked>Hosted Libraries</check-box><div style="height:5px"></div><check-box class="c" checked>Compact Shapes</check-box><div style="height:4px"></div><check-box class="c">Multiframe bounds</check-box>
<div class="dim" style="margin-top:9px">JavaScript Namespaces:</div>
<div class="ns"><label for="a">Symbols:</label><input id="a" value="lib"><label for="b">Images:</label><input id="b" value="images"><label for="c">CreateJS:</label><input id="c" value="createjs"></div></div></div>
<footer><push-button round>Help</push-button><push-button round>Publish</push-button><push-button round primary>OK</push-button><push-button round>Cancel</push-button></footer>
<svg class="arrows" viewBox="0 0 130 220"><g fill="#b5100c"><path d="M64 167L119 128 115 124 140 121 127 140 124 135z"/><path d="M29 198L104 191 103 185 119 193 105 204 104 197z"/></g></svg>`);

/* ---- application ---- */
define('an-app', `:host{display:flex;flex-direction:column;height:100vh;position:relative}
.w{flex:1;display:grid;grid-template-columns:5px 23px 1fr 193px 199px 4px;min-height:0;background:#3f3f3f}.w>*{min-width:0}.s{background:#4b4b4b}.m{display:flex;flex-direction:column;margin:0 3px 0 2px;min-height:0}
.p{display:flex;flex-direction:column;margin:0 2px 0 1px;min-height:0}.p .cap{height:7px;background:var(--strip);display:flex;justify-content:flex-end;padding:1px 4px 0 0}.cap an-icon{width:6px;height:6px}.p.q{margin:0 0 0 1px}
publish-dialog{position:absolute;left:298px;top:152px}`,
`<title-bar></title-bar><div class="w"><div class="s"></div><tool-panel></tool-panel><div class="m"><timeline-panel></timeline-panel><stage-panel></stage-panel></div>
<div class="p"><div class="cap">${I('dbl')}</div><align-panel></align-panel><library-panel></library-panel></div>
<div class="p q"><div class="cap">${I('dbl')}</div><color-panel></color-panel><properties-panel></properties-panel></div><div class="s"></div></div><publish-dialog></publish-dialog>`);
</script>
</body>
</html>
